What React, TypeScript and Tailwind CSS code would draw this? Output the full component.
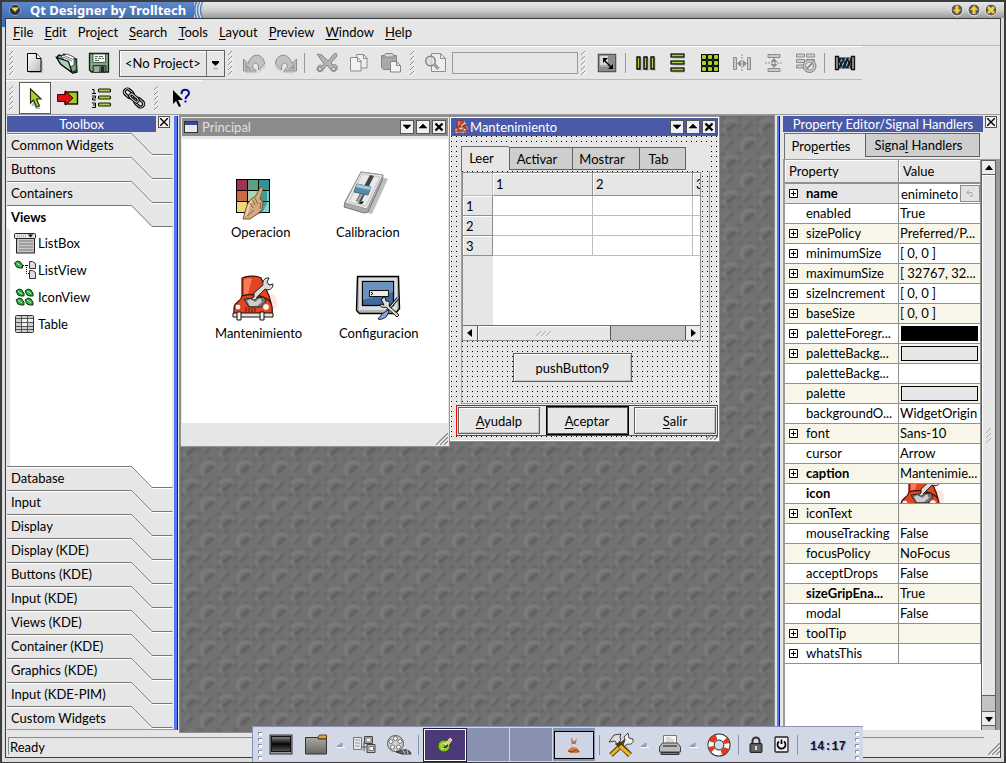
import React from "react";

const DOTS =
  "bg-[#e6e6e6] bg-[linear-gradient(90deg,transparent_1px,#e6e6e6_1px),linear-gradient(#000_1px,#e6e6e6_1px)] bg-[size:5px_5px]";

type IconProps = { w: number; h: number; children: React.ReactNode; cls?: string };

function Ico({ w, h, children, cls }: IconProps) {
  return (
    <svg width={w} height={h} viewBox={`0 0 ${w} ${h}`} className={`shrink-0 ${cls ?? ""}`} aria-hidden="true">
      {children}
    </svg>
  );
}

/* ---------- toolbar icons ---------- */

const NewIcon = () => (
  <Ico w={20} h={22}>
    <path d="M4 20.500h13V9" stroke="#aaa" fill="none" />
    <path d="M2.500 1.500h9l4.500 5v13h-13.500z" fill="url(#paper)" stroke="#000" />
    <path d="M11.500 1.500v5h4.500" fill="#fff" stroke="#000" />
  </Ico>
);
const OpenIcon = () => (
  <Ico w={24} h={22}>
    <path d="M2 5l2-2 3 1 2-2 5 3 7 2 1 13-4 1L5 11z" fill="#7aa887" stroke="#000" strokeWidth="1.200" />
    <path d="M6 4l6-2 7 3v8l-4 2z" fill="#fff" stroke="#333" strokeWidth=".8" />
    <path d="M8 5l9 4M9 3.500l9 4" stroke="#555" strokeWidth=".8" />
    <path d="M1.500 5.500l12 4 3.500 11L6 12.500z" fill="#a9d2b0" stroke="#000" strokeWidth="1.200" />
    <path d="M17 20.500l4.500-2V6.500" fill="none" stroke="#163d22" strokeWidth="1.500" />
  </Ico>
);
const SaveIcon = () => (
  <Ico w={22} h={22}>
    <path d="M1.500 1.500h19v18.500h-17l-2-2z" fill="#7cab86" stroke="#0c1f10" strokeWidth="1.300" />
    <path d="M5 2h12.500v8.500H5z" fill="#f5f5f5" stroke="#23472c" strokeWidth=".8" />
    <path d="M7 4.500h3m1 0h4M7 6.500h2m1 0h3m1 0h2M7 8.500h4" stroke="#666" />
    <path d="M5 13.500h13V20H5z" fill="#6a6a6a" stroke="#1b2c20" strokeWidth=".8" />
    <path d="M13 14.500h3V20h-3z" fill="#20252b" />
    <path d="M6 14.500h5V20H6z" fill="#a5a5a5" />
  </Ico>
);
const UndoIcon = ({ flip }: { flip?: boolean }) => (
  <Ico w={24} h={22} cls={flip ? "-scale-x-100" : ""}>
    <path d="M3 20.500h12M17 20l6-6" stroke="#ccc" strokeWidth="1.500" />
    <path d="M1.500 7v12h13l-4-4c0-4 3-5 5-3 1 1 1 3 1 6l6-6c0-6-5-10-10-8.500-3 1-5 4-6.500 8z" fill="#c2c2c2" stroke="#8b8b8b" />
    <path d="M3 10.500v7h7z" fill="#a3a3a3" />
  </Ico>
);
const CutIcon = () => (
  <Ico w={24} h={22}>
    <path d="M2 2l5 1 6 6 5-6 3-2 1 3-6 7 2 2c3-1 5 1 4 4-1 3-5 3-6 1l-4-5-4 5c-2 3-6 2-6-1s3-5 6-3l1-2z" fill="#b4b4b4" stroke="#858585" />
    <circle cx="5" cy="17" r="1.800" fill="#e6e6e6" stroke="#858585" />
    <circle cx="18.500" cy="17" r="1.800" fill="#e6e6e6" stroke="#858585" />
  </Ico>
);
const CopyIcon = () => (
  <Ico w={22} h={22}>
    <path d="M8.500 2.500h7l3.500 3.500v10h-10.500z" fill="#eee" stroke="#8c8c8c" />
    <path d="M15.500 2.500v4h4" fill="none" stroke="#8c8c8c" />
    <path d="M2.500 5.500h7l3.500 3.500v10h-10.500z" fill="#f2f2f2" stroke="#8c8c8c" />
    <path d="M9.500 5.500v4h4" fill="none" stroke="#8c8c8c" />
  </Ico>
);
const PasteIcon = () => (
  <Ico w={24} h={22}>
    <path d="M2.500 3.500h15v14h-13l-2-2z" fill="#a9a9a9" stroke="#858585" />
    <path d="M6.500 1.500h7l2 3.500h-11z" fill="#d5d5d5" stroke="#858585" />
    <path d="M11.500 9.500h6l4 4v6.500h-10z" fill="#f3f3f3" stroke="#858585" />
    <path d="M17.500 9.500v4h4" fill="none" stroke="#858585" />
  </Ico>
);
const FindIcon = () => (
  <Ico w={24} h={22}>
    <path d="M7.500 1.500h9l5 5v13h-14z" fill="#eee" stroke="#8c8c8c" />
    <path d="M16.500 1.500v5h5" fill="none" stroke="#8c8c8c" />
    <circle cx="6.500" cy="9" r="4.800" fill="#ddd" fillOpacity=".8" stroke="#858585" strokeWidth="1.400" />
    <path d="M10 12l4.500 5" stroke="#858585" strokeWidth="3" />
    <path d="M10 12l4.500 5" stroke="#c7c7c7" />
  </Ico>
);
const AdjustIcon = () => (
  <Ico w={20} h={20}>
    <path d="M1.500 1.500h17v17h-17z" fill="#aaa" stroke="#555" strokeWidth="1.500" />
    <path d="M11 2h7v16H2v-4h9z" fill="#8c8c8c" />
    <path d="M3 3h8v9H3z" fill="#d8d8d8" />
    <path d="M7 7l8 8" stroke="#000" strokeWidth="1.500" />
    <path d="M6 5v5l5-5zM16 16v-5l-5 5z" fill="#000" />
  </Ico>
);
const ColsIcon = () => (
  <Ico w={20} h={16}>
    {[1, 8, 15].map((x) => (
      <g key={x}>
        <path d={`M${x + 1} 15h4V3`} stroke="#aaa" fill="none" />
        <rect x={x} y="2" width="3" height="12" fill="#a4cf37" stroke="#000" strokeWidth="1.400" />
      </g>
    ))}
  </Ico>
);
const RowsIcon = () => (
  <Ico w={16} h={20}>
    {[1, 8, 15].map((y) => (
      <g key={y}>
        <path d={`M3 ${y + 4}h12`} stroke="#aaa" />
        <rect x="1" y={y} width="13" height="3" fill="#a4cf37" stroke="#000" strokeWidth="1.200" />
      </g>
    ))}
  </Ico>
);
const GridIcon = () => (
  <Ico w={18} h={18}>
    <rect width="18" height="18" fill="#0c1200" />
    {[0, 1, 2].map((r) =>
      [0, 1, 2].map((c) => <rect key={`${r}${c}`} x={c * 6 + 1} y={r * 6 + 1} width="4" height="4" rx="1" fill="#a8d138" />),
    )}
    <path d="M6 0v18M12 0v18M0 6h18M0 12h18" stroke="#888" strokeWidth=".6" strokeDasharray="1 5" />
  </Ico>
);
const SplitH = () => (
  <Ico w={20} h={20}>
    <path d="M1.500 4.500h3v12h-3zM15.500 4.500h3v12h-3z" fill="#c9c9c9" stroke="#8c8c8c" />
    <path d="M10 1v18" stroke="#8c8c8c" strokeDasharray="2 1" />
    <path d="M5 10.500l4-3.500v7zM15 10.500l-4-3.500v7z" fill="#8c8c8c" />
  </Ico>
);
const SplitV = () => (
  <Ico w={20} h={20}>
    <path d="M4 1.500h12v3H4zM4 15.500h12v3H4z" fill="#c9c9c9" stroke="#8c8c8c" />
    <path d="M1 10h18" stroke="#8c8c8c" strokeDasharray="2 1" />
    <path d="M10 5l-3.500 4h7zM10 15l-3.500-4h7z" fill="#8c8c8c" />
  </Ico>
);
const BreakIcon = () => (
  <Ico w={22} h={22}>
    <path d="M1.500 2h8v3h-8zM11.500 2h8v3h-8zM1.500 7.500h8v3h-8zM11.500 7.500h8v3h-8zM1.500 13h8v3h-8z" fill="#cfcfcf" stroke="#8c8c8c" />
    <circle cx="14.500" cy="14" r="6.500" fill="#c8c8c8" stroke="#7f7f7f" />
    <circle cx="14.500" cy="14" r="4" fill="#eee" stroke="#8c8c8c" />
    <path d="M11.500 17l6-6" stroke="#8c8c8c" strokeWidth="2" />
  </Ico>
);
const SpacerIcon = () => (
  <Ico w={22} h={16}>
    <path d="M4.500 2.500h13v11h-13z" fill="#16222b" />
    <path d="M5 10l3-6M7 13l5-10M11 13l5-10M15 13l2.500-5" stroke="#86bddb" strokeWidth="1.300" />
    <path d="M5 4l3 8M9 3l3 10M13 3l4 9" stroke="#0a1014" />
    <path d="M1.500 1.500h3v13h-3zM17.500 1.500h3v13h-3z" fill="#999" stroke="#111" strokeWidth="1.300" />
  </Ico>
);
const PointerIcon = () => (
  <Ico w={16} h={22}>
    <path d="M5 19l2-3 3 6 3-1" stroke="#bbb" fill="none" strokeWidth="2" />
    <path d="M3.500 2v14l3-3 3 7 3-1-3-7h4.500z" fill="#a9cf33" stroke="#26330a" strokeWidth="1.200" />
  </Ico>
);
const TabOrderIcon = () => (
  <Ico w={24} h={20}>
    <rect x="9" y="4" width="12.500" height="12" fill="#9ccb22" stroke="#000" strokeWidth="1.300" />
    <path d="M1.500 6.500h8V3l7.500 7-7.500 7v-3.500h-8z" fill="#e01010" stroke="#350000" />
  </Ico>
);
const NumberedIcon = () => (
  <Ico w={22} h={22}>
    <path d="M2 2.500h2v4M2 6.500h4M2 9h3.500v2H2.500v2H6M2 16h3.500v4.500H2M3 18h2" stroke="#000" fill="none" />
    {[2, 9, 16].map((y) => (
      <rect key={y} x="8.500" y={y} width="12" height="3" rx="1" fill="#a4cf37" stroke="#172000" strokeWidth="1.200" />
    ))}
  </Ico>
);
const ChainIcon = () => (
  <Ico w={24} h={24}>
    <g transform="rotate(42 12 12)" fill="none">
      <rect x="0" y="9" width="10" height="6" rx="3" stroke="#000" strokeWidth="3.200" />
      <rect x="0" y="9" width="10" height="6" rx="3" stroke="#c9c9c9" />
      <rect x="14" y="9" width="10" height="6" rx="3" stroke="#000" strokeWidth="3.200" />
      <rect x="14" y="9" width="10" height="6" rx="3" stroke="#c9c9c9" />
      <rect x="7" y="10" width="10" height="4" rx="2" stroke="#000" strokeWidth="3" />
      <rect x="7" y="10" width="10" height="4" rx="2" stroke="#ddd" />
    </g>
  </Ico>
);
const WhatsThisIcon = () => (
  <Ico w={20} h={20}>
    <path d="M2 2v14l3-3 3 6 2-1-3-6h5z" fill="#000" />
    <path d="M10.500 6c0-6 7.500-5 7.500-1 0 3-3.500 3-3.500 6" fill="none" stroke="#0a0a90" strokeWidth="2" />
    <path d="M13.500 12.500h2v2h-2z" fill="#0a0a90" />
  </Ico>
);

/* ---------- form pictures ---------- */

const CarIcon = ({ w = 45, h = 46 }: { w?: number; h?: number }) => (
  <svg width={w} height={h} viewBox="0 0 45 46" className="shrink-0" aria-hidden="true">
    <ellipse cx="40" cy="27" rx="5" ry="8" fill="#f6c9bd" opacity=".45" />
    <path d="M10 3c6-3 16-2 19 0l8 18 2 7-28 1-1-10z" fill="#e2451f" stroke="#400b00" strokeWidth="1.200" />
    <path d="M12 5c2-2 6-2 8-1l-4 15-4 4z" fill="#f77c58" />
    <path d="M2 33c0-6 7-6 8-12 8-3 18-1 25 3 5 3 6 8 5 15l-1 2H2z" fill="#e34522" stroke="#3c0a00" strokeWidth="1.200" />
    <path d="M12 24l20-2 2 4-5 6H17z" fill="#747474" stroke="#252525" />
    <path d="M15 26l5-3 3 4 5-4 2 4-5 4h-7z" fill="#cdcdcd" />
    <path d="M14 32v5M17 33v4M20 33v4M23 33v4" stroke="#5a1505" />
    <circle cx="6" cy="32" r="3" fill="#fff1e9" stroke="#b4482f" />
    <circle cx="34" cy="32" r="3.500" fill="#fff1e9" stroke="#b4482f" />
    <path d="M1 38h40v4H1z" fill="#e5e5e5" stroke="#111" />
    <path d="M5 37h4v8H5zM28 37h4v8h-4z" fill="#f2f2f2" stroke="#111" />
    <path d="M22 18l9-8c-1-4 2-8 6-7l-2 4 2 3 4-1c0 5-4 7-8 5l-8 8c-1 3-3 4-6 2l3-2z" fill="#ddd" stroke="#222" />
  </svg>
);
const TouchIcon = () => {
  const colors = ["#a03354", "#5da184", "#2f9494", "#cc6a43", "#a9d7b4", "#6fd0cb", "#f0d778", "#b6e2c6", "#7cd8d2"];
  return (
    <Ico w={40} h={44}>
      {colors.map((c, i) => (
        <rect key={i} x={3.500 + (i % 3) * 11} y={2.500 + Math.floor(i / 3) * 11} width="11" height="11" fill={c} stroke="#000" />
      ))}
      <path d="M31 13l3 2v12l-5 9-10 4z" fill="#205450" opacity=".45" />
      <path d="M10 42l4-14 4-6 4-2 5-9c1-2 3-1 3 1l-3 10 3 3-1 8-6 5-6 4z" fill="#d3ab7e" stroke="#6d4c2c" strokeWidth=".9" />
      <path d="M13 39l3-11 4-6" stroke="#f0d3ae" strokeWidth="2" fill="none" />
      <path d="M19 22l3 6M22 21l3 6M17 26l3 5M14 39l7-6M28 25l-1 7" stroke="#8a6038" fill="none" />
    </Ico>
  );
};
const SliderIcon = () => (
  <Ico w={48} h={46}>
    <path d="M20 42l10 2 16-35-6-2z" fill="#000" opacity=".25" />
    <path d="M19 2l22 3-1 6-14 31-4 1L2 37l1-5z" fill="#aaa" stroke="#777" />
    <path d="M19 2l22 3-16 34L3 33z" fill="#e9e9e9" stroke="#999" />
    <path d="M20 4l18 3-14 29-17-4z" fill="none" stroke="#c4c4c4" />
    <path d="M28 5l-14 26 5 1L32 6z" fill="#444" />
    <path d="M21 22l-5 9" stroke="#aaa" strokeWidth="2.500" />
    <path d="M15 14l14 3-3 8-14-3z" fill="#5a8ca2" stroke="#3b6c80" />
    <path d="M15 14l14 3-1 3-14-3z" fill="#a9cbd8" />
    <path d="M15 33l7-2-2 3z" fill="#111" />
  </Ico>
);
const MonitorIcon = () => (
  <Ico w={48} h={46}>
    <path d="M2.500 1.500h41l1 32-4 5h-36l-3-3z" fill="#b4b4b4" stroke="#000" strokeWidth="1.400" />
    <path d="M4 3h38v32H4z" fill="#dcdcdc" />
    <rect x="7.500" y="6.500" width="31" height="24" fill="#41699d" stroke="#000" strokeWidth="1.300" />
    <path d="M8 7h30v10L8 25z" fill="#6b93bf" />
    <rect x="14.500" y="15.500" width="19" height="6" fill="#ebebeb" stroke="#111" />
    <path d="M16 17l2 1.500-2 1.500" stroke="#000" fill="none" />
    <path d="M43 23L32 36" stroke="#222" strokeWidth="3" />
    <path d="M43 23L32 36" stroke="#fff" />
    <path d="M33 35l-6 4-4 5c2 1 5 0 8-2l3-5z" fill="#89a7d2" stroke="#152540" />
    <path d="M26 24l4-2 1 4c3 0 4 1 3 5l10 9-2 2-11-10c-3 1-6 0-6-3l4 1z" fill="#dedede" stroke="#111" />
  </Ico>
);

/* ---------- toolbox entries ---------- */

const ListBoxIcon = () => (
  <Ico w={22} h={22}>
    <rect x="2.500" y="6" width="18" height="15" fill="#c8c8c8" stroke="#222" />
    <rect x=".5" y="1.500" width="21" height="5" rx="1" fill="#e5e5e5" stroke="#222" />
    <path d="M14 2.500h5l-2.500 3z" fill="#000" />
    <path d="M3 4h9" stroke="#888" strokeDasharray="1 1" />
    <path d="M5 9h14M5 12h14M5 15h14M5 18h14" stroke="#777" />
  </Ico>
);
const LEAF = "M0 2l3-2 3 1 1 2 1 1v3l-3 0-3-1z";
const ListViewIcon = () => (
  <Ico w={22} h={20}>
    <g transform="translate(.5 1)">
      <path d={LEAF} fill="#2fae44" stroke="#06340e" />
      <path d="M2 2l4 3" stroke="#a9ecb0" />
    </g>
    <path d="M9 5.500h6M12.500 5v9M12 13.500h3" stroke="#000" strokeDasharray="1 1" fill="none" />
    <path d="M15.500 1.500h3l3 2v5h-6zM15.500 10.500h3l3 2v6h-6z" fill="#ddd" stroke="#333" />
  </Ico>
);
const IconViewIcon = () => (
  <Ico w={22} h={20}>
    {[[2, 2], [11, 2], [2, 11], [11, 11]].map(([x, y]) => (
      <g key={`${x}-${y}`} transform={`translate(${x} ${y})`}>
        <path d={LEAF} fill="#2fae44" stroke="#06340e" />
        <path d="M2 2l4 3" stroke="#a9ecb0" />
      </g>
    ))}
  </Ico>
);
const TableIcon = () => (
  <Ico w={22} h={20}>
    <rect x="1.500" y="1.500" width="18" height="17" rx="1" fill="#cfcfcf" stroke="#333" />
    <path d="M2 4.500h17M2 8.500h17M2 12.500h17M2 15.500h17M7.500 2v16M13.500 2v16" stroke="#555" />
    <path d="M8 5h5v3H8zM14 5h5v3h-5zM8 9h5v3H8z" fill="#f3f3f3" />
  </Ico>
);

/* ---------- small building blocks ---------- */

function Handle() {
  return (
    <svg width="13" height="26" viewBox="0 0 13 26" className="shrink-0" aria-hidden="true">
      {[1, 6, 11, 16, 21].map((y) => (
        <g key={y}>
          <path d={`M3 ${y + 4}l4-4`} stroke="#8c8c8c" />
          <path d={`M4 ${y + 4.500}l4-4`} stroke="#fff" />
        </g>
      ))}
    </svg>
  );
}
const Sep = ({ cls }: { cls: string }) => <div className={`h-5 w-px shrink-0 bg-[#9a9a9a] ${cls}`} />;

function ToolButton({ label, children, pressed, disabled }: { label: string; children: React.ReactNode; pressed?: boolean; disabled?: boolean }) {
  return (
    <button
      type="button"
      aria-label={label}
      disabled={disabled}
      className={`flex h-8 w-8 shrink-0 items-center justify-center ${pressed ? "border border-[#5f5f5f] bg-white" : ""}`}
    >
      {children}
    </button>
  );
}

function Mnemonic({ text, at }: { text: string; at: number }) {
  return (
    <span>
      {text.slice(0, at)}
      <span className="underline underline-offset-2">{text[at]}</span>
      {text.slice(at + 1)}
    </span>
  );
}

function CloseX({ label }: { label: string }) {
  return (
    <button type="button" aria-label={label} className="flex size-3 items-center justify-center border border-[#555] bg-[#f2f2f2]">
      <svg width="8" height="8" viewBox="0 0 8 8" aria-hidden="true">
        <path d="M0 0l8 8M8 0L0 8" stroke="#000" strokeWidth="1.400" />
      </svg>
    </button>
  );
}

function DockTitle({ title }: { title: string }) {
  return (
    <div className="flex h-[18px] shrink-0 items-start gap-0.5 pt-px pl-px">
      <div className="h-4 flex-1 bg-[#4a5aa8] text-center leading-4 text-white">{title}</div>
      <CloseX label={`Close ${title}`} />
    </div>
  );
}

function MdiButtons() {
  const shapes = ["M2 4h8l-4 4z", "M2 7h8l-4-4z", ""];
  return (
    <div className="flex gap-0.5">
      {shapes.map((d, i) => (
        <button
          key={i}
          type="button"
          aria-label={["Minimize", "Maximize", "Close"][i]}
          className="size-3.5 border border-[#555] bg-[#f0f0f0]"
        >
          <svg width="12" height="12" viewBox="0 0 12 12" aria-hidden="true">
            {d ? <path d={d} fill="#000" stroke="#000" strokeWidth=".6" /> : <path d="M2.500 2.500l7 7M9.500 2.500l-7 7" stroke="#000" strokeWidth="2.400" />}
          </svg>
        </button>
      ))}
    </div>
  );
}

function Grip() {
  return (
    <svg width="12" height="12" viewBox="0 0 12 12" className="shrink-0" aria-hidden="true">
      <path d="M0 12L12 0M4 12l8-8M8 12l4-4" stroke="#888" strokeWidth="1.300" />
      <path d="M2 12L12 2M6 12l6-6M10 12l2-2" stroke="#fff" />
    </svg>
  );
}

/* ---------- toolbox ---------- */

function ToolboxTab({ label, active, over }: { label: string; active?: boolean; over?: boolean }) {
  return (
    <button type="button" className={`relative flex h-6 w-full shrink-0 items-center pl-1 text-left ${active ? "font-bold" : ""}`}>
      <svg width="166" height="24" viewBox="0 0 166 24" className="absolute inset-0" aria-hidden="true">
        {over && <path d="M125 0l20 21h20V0z" fill="#fff" />}
        {active && <path d="M0 1h125l20 21h20v2H0z" fill="#fff" />}
        <path d="M0 1.500h124.500l20 21h21" fill="none" stroke="#fff" />
        <path d="M0 .5h124.500l20.500 21h20.500" fill="none" stroke="#777" />
      </svg>
      <span className="relative">{label}</span>
    </button>
  );
}

function Toolbox() {
  const items: [string, React.ReactNode][] = [
    ["ListBox", <ListBoxIcon />],
    ["ListView", <ListViewIcon />],
    ["IconView", <IconViewIcon />],
    ["Table", <TableIcon />],
  ];
  const lower = ["Database", "Input", "Display", "Display (KDE)", "Buttons (KDE)", "Input (KDE)", "Views (KDE)", "Container (KDE)", "Graphics (KDE)", "Input (KDE-PIM)", "Custom Widgets"];
  return (
    <aside className="flex w-[168px] shrink-0 flex-col">
      <div className="pr-1">
        <DockTitle title="Toolbox" />
      </div>
      <div className="flex flex-1 flex-col pl-px">
        <ToolboxTab label="Common Widgets" />
        <ToolboxTab label="Buttons" />
        <ToolboxTab label="Containers" />
        <ToolboxTab label="Views" active />
        <ul className="mr-0.5 ml-[3px] flex-1 bg-white pl-1">
          {items.map(([name, icon]) => (
            <li key={name} className="flex h-[27px] items-center gap-0.5">
              {icon}
              <span>{name}</span>
            </li>
          ))}
        </ul>
        {lower.map((l, i) => (
          <ToolboxTab key={l} label={l} over={i === 0} />
        ))}
        <div className="mt-[-1px] h-px bg-[#999]" />
      </div>
    </aside>
  );
}

/* ---------- workspace ---------- */

function Texture() {
  return (
    <svg className="absolute inset-0 h-full w-full" aria-hidden="true">
      <defs>
        <filter id="soft" x="-20%" y="-20%" width="140%" height="140%">
          <feGaussianBlur stdDeviation="1" />
        </filter>
        <pattern id="bumps" width="36" height="36" patternUnits="userSpaceOnUse">
          <rect width="36" height="36" fill="#717171" />
          <g filter="url(#soft)" fill="none" strokeLinecap="round">
            <path d="M5 16a7 7 0 0 1 12-9M23 34a7 7 0 0 1 12-9" stroke="#808080" strokeWidth="2.500" />
            <path d="M8 14l7-6M26 32l7-6" stroke="#5d5d5d" strokeWidth="3" />
            <path d="M25 13l5-6M7 31l5-6" stroke="#636363" strokeWidth="3" />
            <path d="M23 11l5-6M5 29l5-6" stroke="#7d7d7d" strokeWidth="2" />
            <path d="M2 2h1M19 1h1M2 19h1M20 19h1M19 10h1M2 10h1M10 19h1M30 19h1" stroke="#626262" strokeWidth="3" />
          </g>
        </pattern>
      </defs>
      <rect width="100%" height="100%" fill="url(#bumps)" />
    </svg>
  );
}

function PrincipalWindow() {
  const items: [string, React.ReactNode, string, string][] = [
    ["Operacion", <TouchIcon />, "left-[49px] top-[37px]", "pr-4"],
    ["Calibracion", <SliderIcon />, "left-[154px] top-[33px]", "pr-1 pb-1 mb-1"],
    ["Mantenimiento", <CarIcon />, "left-[33px] top-[136px]", "pr-2 mb-0.5"],
    ["Configuracion", <MonitorIcon />, "left-[157px] top-[136px]", "mb-0.5"],
  ];
  return (
    <section className="absolute top-0 left-0 flex h-[331px] w-[270px] flex-col border border-[#909090] bg-[#e6e6e6] p-px">
      <header className="flex h-[18px] shrink-0 items-center gap-1 bg-[#8c8c8c] pr-0.5 pl-0.5 text-[#e0e0e0]">
        <svg width="14" height="12" viewBox="0 0 14 12" aria-hidden="true">
          <rect x=".5" y=".5" width="13" height="11" fill="#e8e8e8" stroke="#333" />
          <path d="M1 1h12v3H1z" fill="#3b45a5" />
        </svg>
        <span className="flex-1">Principal</span>
        <MdiButtons />
      </header>
      <div className="relative mt-[3px] flex-1 bg-white">
        {items.map(([name, icon, pos, pad]) => (
          <button key={name} type="button" className={`absolute flex flex-col items-center ${pos}`}>
            <span className={`flex h-[46px] items-center ${pad}`}>{icon}</span>
            <span className="leading-5">{name}</span>
          </button>
        ))}
      </div>
      <footer className="flex h-[22px] shrink-0 items-end justify-end">
        <Grip />
      </footer>
    </section>
  );
}

const PUSH = "border border-[#606060] bg-[#e6e6e6] shadow-[inset_1px_1px_0_#fff,inset_-1px_-1px_0_#c4c4c4]";

function MantenimientoWindow() {
  const tabs: [string, string][] = [
    ["Activar", "w-16"],
    ["Mostrar", "w-[67px]"],
    ["Tab", "w-[46px]"],
  ];
  const head = "border-r border-b border-[#8f8f8f] bg-[#e6e6e6] p-0 pl-[3px] text-left font-normal shadow-[inset_1px_1px_0_#fff]";
  const cell = "border-r border-b border-[#bdbdbd] p-0";
  return (
    <section className="absolute top-0 left-[269px] flex h-[326px] w-[271px] flex-col border border-[#909090] bg-white p-px">
      <header className="flex h-[18px] shrink-0 items-center gap-0.5 bg-[#4a5aa8] pr-0.5 pl-[3px] text-white">
        <CarIcon w={14} h={14} />
        <span className="flex-1">Mantenimiento</span>
        <MdiButtons />
      </header>
      <div className={`flex flex-1 flex-col ${DOTS}`}>
        <div className="mt-2.5 mr-2 ml-2.5 flex flex-1 flex-col bg-[#e6e6e6]">
          <div className="flex h-[25px] items-end bg-[#e6e6e6]" role="tablist">
            <button role="tab" aria-selected="true" type="button" className="h-[25px] w-12 border-t border-l border-[#707070] bg-[#e6e6e6] pr-2 pb-0.5">
              Leer
            </button>
            {tabs.map(([t, w], i) => (
              <button key={t} role="tab" aria-selected="false" type="button" className={`mb-px h-[23px] border-y border-r border-[#606060] bg-[#cecece] pr-2 ${i === 0 ? "border-l" : ""} ${w}`}>
                {t}
              </button>
            ))}
          </div>
          <div className={`flex flex-1 flex-col border border-t-0 border-[#a0a0a0] pt-px pr-2 ${DOTS}`}>
            <div className="flex h-[169px] flex-col border border-[#8c8c8c] bg-white">
              <div className="flex flex-1 flex-col overflow-hidden bg-[linear-gradient(90deg,#e6e6e6_30px,#fff_30px)]">
                <table className="w-[270px] table-fixed border-separate border-spacing-0">
                  <colgroup>
                    <col className="w-[30px]" />
                    <col className="w-[100px]" />
                    <col className="w-[100px]" />
                    <col className="w-10" />
                  </colgroup>
                  <thead>
                    <tr className="h-[23px]">
                      <td className="border-r border-b border-[#bbb] bg-[#e6e6e6] p-0" />
                      <th className={head}>1</th>
                      <th className={head}>2</th>
                      <th className={head}>3</th>
                    </tr>
                  </thead>
                  <tbody>
                    {["1", "2", "3"].map((n) => (
                      <tr key={n} className="h-5">
                        <th className={head}>{n}</th>
                        <td className={cell} />
                        <td className={cell} />
                        <td className={cell} />
                      </tr>
                    ))}
                  </tbody>
                </table>
              </div>
              <div className="flex h-[15px] border-t border-[#707070] bg-[#c3c3c3]">
                <button type="button" aria-label="Scroll left" className="flex w-[15px] items-center justify-center border-r border-[#555] bg-[#ececec]">
                  <svg width="6" height="8" viewBox="0 0 6 8" aria-hidden="true"><path d="M5 0v8L0 4z" /></svg>
                </button>
                <div className="flex w-[133px] items-center justify-center border-r border-[#555] bg-[#e6e6e6] shadow-[inset_1px_1px_0_#fff]">
                  <svg width="18" height="7" viewBox="0 0 18 7" aria-hidden="true"><path d="M1 6l5-5M6 6l5-5M11 6l5-5" stroke="#aaa" /></svg>
                </div>
                <div className="flex-1" />
                <button type="button" aria-label="Scroll right" className="flex w-[15px] items-center justify-center border-l border-[#555] bg-[#ececec]">
                  <svg width="6" height="8" viewBox="0 0 6 8" aria-hidden="true"><path d="M1 0v8l5-4z" /></svg>
                </button>
              </div>
            </div>
            <button type="button" className={`mt-3 ml-[51px] h-[29px] w-[119px] ${PUSH}`}>
              pushButton9
            </button>
          </div>
        </div>
        <div className="mt-px ml-[5px] flex h-[31px] items-center justify-between border border-[#f00] bg-[#e6e6e6] px-px">
          <button type="button" className={`h-[27px] w-[82px] ${PUSH}`}><Mnemonic text="Ayudalp" at={0} /></button>
          <button type="button" className="h-[29px] w-[83px] border border-black bg-[#e6e6e6] shadow-[inset_1px_1px_0_#555,inset_-1px_-1px_0_#555]"><Mnemonic text="Aceptar" at={0} /></button>
          <button type="button" className={`h-[27px] w-[82px] ${PUSH}`}><Mnemonic text="Salir" at={0} /></button>
        </div>
        <div className="flex h-1 items-end justify-end overflow-hidden">
          <Grip />
        </div>
      </div>
    </section>
  );
}

/* ---------- property editor ---------- */

type Prop = { n: string; v?: string; plus?: boolean; bold?: boolean; kind?: "black" | "grey" | "icon" | "edit" };
const PROPS: Prop[] = [
  { n: "name", v: "enimineto", plus: true, bold: true, kind: "edit" },
  { n: "enabled", v: "True" },
  { n: "sizePolicy", v: "Preferred/P...", plus: true },
  { n: "minimumSize", v: "[ 0, 0 ]", plus: true },
  { n: "maximumSize", v: "[ 32767, 32...", plus: true },
  { n: "sizeIncrement", v: "[ 0, 0 ]", plus: true },
  { n: "baseSize", v: "[ 0, 0 ]", plus: true },
  { n: "paletteForegr...", plus: true, kind: "black" },
  { n: "paletteBackg...", plus: true, kind: "grey" },
  { n: "paletteBackg..." },
  { n: "palette", kind: "grey" },
  { n: "backgroundO...", v: "WidgetOrigin" },
  { n: "font", v: "Sans-10", plus: true },
  { n: "cursor", v: "Arrow" },
  { n: "caption", v: "Mantenimie...", plus: true, bold: true },
  { n: "icon", bold: true, kind: "icon" },
  { n: "iconText", plus: true },
  { n: "mouseTracking", v: "False" },
  { n: "focusPolicy", v: "NoFocus" },
  { n: "acceptDrops", v: "False" },
  { n: "sizeGripEna...", v: "True", bold: true },
  { n: "modal", v: "False" },
  { n: "toolTip", plus: true },
  { n: "whatsThis", plus: true },
];

function PropValue({ p }: { p: Prop }) {
  if (p.kind === "black") return <div className="mx-0.5 h-[15px] bg-black" />;
  if (p.kind === "grey") return <div className="mx-0.5 h-[15px] border border-black bg-[#e6e6e6]" />;
  if (p.kind === "icon")
    return (
      <div className="flex h-[19px] items-center overflow-hidden">
        <CarIcon />
      </div>
    );
  if (p.kind === "edit")
    return (
      <div className="flex h-[19px] items-center bg-white">
        <input aria-label="name" defaultValue={p.v} className="h-[19px] w-0 flex-1 pl-0.5 outline-none" />
        <button type="button" aria-label="Reset" className="flex h-[17px] w-5 items-center justify-center border border-[#8c8c8c] bg-[#e3e3e3]">
          <svg width="8" height="8" viewBox="0 0 8 8" aria-hidden="true"><path d="M3 0L1 2.500 3 5M1 2.500h5v4H4" fill="none" stroke="#aaa" /></svg>
        </button>
      </div>
    );
  return <span className="block h-[19px] overflow-hidden pl-px leading-[19px] whitespace-nowrap">{p.v}</span>;
}

function PropertyEditor() {
  const th = "h-6 border-r border-b-2 border-[#8f8f8f] bg-[#e6e6e6] p-0 pl-1 text-left font-normal shadow-[inset_1px_1px_0_#fff]";
  return (
    <aside className="flex w-[218px] shrink-0 flex-col">
      <div className="pr-[3px]">
        <DockTitle title="Property Editor/Signal Handlers" />
      </div>
      <div className="flex h-[26px] shrink-0 items-start pl-0.5" role="tablist">
        <button role="tab" aria-selected="true" type="button" className="h-[26px] w-[81px] border-t border-l border-[#707070] bg-[#e6e6e6] pr-2 pb-0.5">
          <Mnemonic text="Properties" at={3} />
        </button>
        <button role="tab" aria-selected="false" type="button" className="h-6 w-[115px] border border-[#606060] bg-[#cecece] pr-2">
          <Mnemonic text="Signal Handlers" at={5} />
        </button>
      </div>
      <div className="ml-px flex min-h-0 flex-1 border-t border-l-2 border-[#9a9a9a] bg-white">
        <div className="min-w-0 flex-1 overflow-hidden">
          <table className="w-full table-fixed border-separate border-spacing-0">
            <colgroup>
              <col className="w-[114px]" />
              <col />
            </colgroup>
            <thead>
              <tr>
                <th className={th}>Property</th>
                <th className={th}>Value</th>
              </tr>
            </thead>
            <tbody>
              {PROPS.map((p, i) => (
                <tr key={i} className={i === 0 ? "bg-[#e6e6e6]" : i % 2 ? "bg-white" : "bg-[#f8f6e9]"}>
                  <td className="h-5 border-r border-b border-[#8f8f8f] p-0">
                    <div className="flex items-center pl-1">
                      <span className="flex w-[17px] shrink-0">
                        {p.plus && (
                          <svg width="9" height="9" viewBox="0 0 9 9" aria-hidden="true">
                            <path d="M.5.5h8v8h-8zM2 4.500h5M4.500 2v5" fill="#fff" stroke="#000" />
                          </svg>
                        )}
                      </span>
                      <span className={`h-[19px] overflow-hidden leading-[19px] whitespace-nowrap ${p.bold ? "font-bold" : ""}`}>{p.n}</span>
                    </div>
                  </td>
                  <td className="h-5 border-r border-b border-[#8f8f8f] p-0">
                    <PropValue p={p} />
                  </td>
                </tr>
              ))}
            </tbody>
          </table>
        </div>
        <div className="flex w-[15px] shrink-0 flex-col border-x border-[#606060] bg-[#c3c3c3]">
          <button type="button" aria-label="Scroll up" className="flex h-[15px] items-center justify-center border-y border-[#606060] bg-[#ececec]">
            <svg width="8" height="6" viewBox="0 0 8 6" aria-hidden="true"><path d="M0 5h8L4 0z" /></svg>
          </button>
          <div className="flex flex-1 items-center justify-center border-b border-[#606060] bg-[#e6e6e6] shadow-[inset_1px_1px_0_#fff]">
            <svg width="8" height="18" viewBox="0 0 8 18" aria-hidden="true"><path d="M1 7l5-5M1 12l5-5M1 17l5-5" stroke="#aaa" /></svg>
          </div>
          <div className="h-[15px]" />
          <button type="button" aria-label="Scroll down" className="mb-1 flex h-[15px] items-center justify-center border-y border-[#606060] bg-[#ececec]">
            <svg width="8" height="6" viewBox="0 0 8 6" aria-hidden="true"><path d="M0 1h8L4 6z" /></svg>
          </button>
        </div>
        <div className="w-1 bg-[#9a9a9a]" />
      </div>
    </aside>
  );
}

/* ---------- desktop panel ---------- */

const PanelDots = () => (
  <svg width="5" height="30" viewBox="0 0 5 30" className="shrink-0" aria-hidden="true">
    {[2, 8, 14, 20, 26].map((y) => (
      <g key={y}>
        <rect x="0" y={y} width="4" height="3" fill="#8791b3" />
        <rect x="1" y={y + 1} width="3" height="3" fill="#fff" />
      </g>
    ))}
  </svg>
);
const PanelSep = () => <div className="h-5 w-px shrink-0 bg-[#8791b3]" />;
const PanelArrow = () => (
  <Ico w={10} h={6}>
    <path d="M1 4.500L6 1v3.500z" fill="#aab3cc" stroke="#8791b3" />
    <path d="M1 5.500h8" stroke="#fff" />
  </Ico>
);

function Panel() {
  return (
    <nav aria-label="Desktop panel" className="absolute bottom-0 left-[250px] flex h-9 w-[611px] items-center border-t border-l border-[#8791b3] bg-[#d2d8e6] pl-[5px]">
      <PanelDots />
      <button type="button" aria-label="Terminal" className="ml-1.5">
        <Ico w={24} h={22}>
          <rect x="1" y="1" width="22" height="19" fill="#999" stroke="#333" />
          <rect x="2.500" y="2.500" width="19" height="15" fill="url(#term)" stroke="#111" />
        </Ico>
      </button>
      <button type="button" aria-label="Home" className="ml-[11px]">
        <Ico w={24} h={22}>
          <path d="M14 3l1.500-2h7v4H14z" fill="#e0a738" stroke="#5a4310" />
          <path d="M1.500 3.500h12l1 1.500h8v15h-21z" fill="url(#folder)" stroke="#333" />
        </Ico>
      </button>
      <span className="ml-2"><PanelArrow /></span>
      <button type="button" aria-label="Network" className="ml-1.5">
        <Ico w={24} h={20}>
          <path d="M1.500 2.500h8v12h-8z" fill="#e7e7e7" stroke="#777" />
          <path d="M3 5h5M3 8h5M3 11h5" stroke="#999" />
          <path d="M12.500 1.500h8v7h-8zM15 9.500h8v8h-8z" fill="#bdbdbd" stroke="#444" />
          <path d="M14 3h5v4h-5zM17 11.500h4.500v4H17z" fill="#f3f3f3" stroke="#777" />
          <path d="M9 12h6M12 7v9" stroke="#555" />
        </Ico>
      </button>
      <button type="button" aria-label="Multimedia" className="ml-2.5">
        <Ico w={26} h={22}>
          <circle cx="9.500" cy="9.500" r="8" fill="#cfcfcf" stroke="#555" />
          {[[9.5, 4.5], [14, 7.5], [12.5, 13], [6.5, 13], [5, 7.5]].map(([x, y]) => (
            <circle key={x + y * 9} cx={x} cy={y} r="2" fill="#fff" stroke="#555" strokeWidth=".8" />
          ))}
          <path d="M10 18l7-2c5-1 8 2 8 4h-9z" fill="#666" stroke="#333" />
          <path d="M17 16l2 4M21 16l1 4" stroke="#bbb" />
        </Ico>
      </button>
      <div className="ml-1.5"><PanelSep /></div>
      <button type="button" aria-label="Desktop 1" className="ml-[5px] flex h-8 w-[42px] items-center justify-center border border-white bg-[#4a3a78] outline outline-[#241c40]">
        <Ico w={18} h={18}>
          <circle cx="8" cy="10" r="6" fill="#8fc52a" stroke="#38500c" />
          <path d="M5 10a3 3 0 0 1 5-2M5 12l5 1" stroke="#dff29a" fill="none" />
          <path d="M9 9l5-7 2 2-4 5z" fill="#f3bb4c" stroke="#fff" strokeWidth=".8" />
          <path d="M8 12l4-3" stroke="#2e3f0b" strokeWidth="2" />
        </Ico>
      </button>
      <div className="ml-px flex h-[33px] gap-px">
        <button type="button" aria-label="Desktop 2" className="w-[42px] bg-[#8892b0]" />
        <button type="button" aria-label="Desktop 3" className="w-[42px] bg-[#8892b0]" />
        <button type="button" aria-label="Desktop 4" className="flex w-[42px] items-center bg-[#8892b0] pl-px">
          <span className="flex h-7 w-10 items-center justify-center border border-black bg-[#ced4e3]">
            <Ico w={14} h={18}>
              <path d="M4 1l3 5 3-4-2 8H5z" fill="#a5744a" />
              <path d="M5 8h4l1 4H4z" fill="#d9d3cf" />
              <path d="M1 14l4-3 5 1 3 4-3 1H3z" fill="#d8783a" />
              <path d="M1 15l4 1 4-2 3 2" stroke="#6a3c20" fill="none" />
            </Ico>
          </span>
        </button>
      </div>
      <div className="ml-1"><PanelSep /></div>
      <button type="button" aria-label="Settings" className="ml-2">
        <Ico w={26} h={26}>
          <path d="M3 23L19 8" stroke="#4d3904" strokeWidth="5" />
          <path d="M3 23L15 12" stroke="#efb32b" strokeWidth="3" />
          <path d="M15 13l2-5-1-3 4-4 1 5 4 1c1 4-2 6-6 5l-4 4z" fill="#eee" stroke="#444" />
          <path d="M9 10l13 13" stroke="#4d3904" strokeWidth="5.500" />
          <path d="M12 14l10 9" stroke="#efb32b" strokeWidth="3.500" />
          <path d="M1 10l5-7 7-1-1 3 1 3-4 4-2-3z" fill="#ddd" stroke="#444" />
        </Ico>
      </button>
      <span className="ml-1.5"><PanelArrow /></span>
      <button type="button" aria-label="Printer" className="ml-2">
        <Ico w={24} h={22}>
          <path d="M5.500 11V1.500h13V11" fill="#f7f7f7" stroke="#777" />
          <path d="M8 4h5M8 6h8M8 8h8" stroke="#bbb" />
          <path d="M1.500 13l3-4h15l3 4v5h-21z" fill="#bbb" stroke="#444" />
          <path d="M5 11h14v2H5z" fill="#666" />
          <path d="M3 18.500h18v2H3z" fill="#777" stroke="#333" />
        </Ico>
      </button>
      <span className="ml-[7px]"><PanelArrow /></span>
      <button type="button" aria-label="Help" className="ml-2">
        <Ico w={24} h={24}>
          <circle cx="12" cy="12" r="8" fill="none" stroke="#222" strokeWidth="7" />
          <circle cx="12" cy="12" r="8" fill="none" stroke="#fff" strokeWidth="5.200" />
          <path d="M4.500 9a8 8 0 0 1 5-5M14.500 20a8 8 0 0 0 5-5M4 13.500a8 8 0 0 0 2 4M20 10.500a8 8 0 0 0-2-4" stroke="#dd3a20" strokeWidth="5.200" fill="none" />
        </Ico>
      </button>
      <div className="ml-[7px]"><PanelSep /></div>
      <button type="button" aria-label="Lock screen" className="ml-2.5">
        <Ico w={14} h={18}>
          <path d="M3.500 8V5a3.500 3.500 0 0 1 7 0v3" fill="none" stroke="#333" strokeWidth="2" />
          <rect x="1" y="7.500" width="12" height="9" rx="1" fill="#555" stroke="#222" />
          <path d="M3 10h8M3 12h8M3 14h8" stroke="#777" />
          <path d="M7 10v4" stroke="#fff" strokeWidth="1.500" />
        </Ico>
      </button>
      <button type="button" aria-label="Log out" className="ml-[11px]">
        <Ico w={15} h={17}>
          <rect x="1" y="1" width="13" height="15" rx="1" fill="#eee" stroke="#222" strokeWidth="1.300" />
          <path d="M5 5.500a4 4 0 1 0 5 0M7.500 3.500v4.500" fill="none" stroke="#000" strokeWidth="1.700" />
        </Ico>
      </button>
      <div className="ml-2"><PanelSep /></div>
      <time className="mt-1 ml-3 flex-1 font-['Liberation_Mono',monospace] text-xs leading-4 font-bold text-[#10121c] [text-shadow:1px_1px_0_#a9b2ca]">14:17</time>
      <span className="mr-[3px]"><PanelDots /></span>
    </nav>
  );
}

/* ---------- main window ---------- */

function TitleBar() {
  return (
    <header className="mt-0.5 flex h-4 shrink-0 items-stretch bg-[linear-gradient(#e8e8e8,#cfcfcf_50%,#999)]">
      <div className="flex w-[192px] shrink-0 items-center gap-2 overflow-hidden bg-[linear-gradient(#5f87c8,#4070b4)] pl-1.5">
        <Ico w={14} h={14}>
          <circle cx="7" cy="7" r="5.500" fill="#283048" stroke="#8fa8d0" />
          <path d="M3 4.500h8L7 9z" fill="#f8d640" />
        </Ico>
        <h1 className="font-['Noto_Sans',sans-serif] text-[13px] leading-4 font-bold whitespace-nowrap text-white">Qt Designer by Trolltech</h1>
      </div>
      <svg width="10" height="16" viewBox="0 0 10 16" className="shrink-0" aria-hidden="true">
        <path d="M0 0h4q-4 8 0 16H0z" fill="#4a78bc" />
        <path d="M2.500 0q-4 8 0 16M5.500 0q-4 8 0 16M8.500 0q-4 8 0 16" stroke="#5b83c0" strokeWidth="1.500" fill="none" />
        <path d="M1 0q-4 8 0 16M4 0q-4 8 0 16M7 0q-4 8 0 16" stroke="#dfe6ef" fill="none" />
      </svg>
      <div className="flex flex-1 items-center justify-end gap-[3px] pr-1.5">
        {["M5.500 2.500h3v4h2.500L7 11 3 6.500h2.500z", "M5.500 11h3V7H11L7 2.500 3 7h2.500z", "M3.500 3.500h2L7 5l1.500-1.500h2v2L9 7l1.500 1.500v2h-2L7 9l-1.500 1.500h-2v-2L5 7 3.500 5.500z"].map((d, i) => (
          <button key={i} type="button" aria-label={["Minimize window", "Maximize window", "Close window"][i]}>
            <Ico w={14} h={14}>
              <circle cx="7" cy="7" r="6" fill="#5d5d5d" stroke="#eee" />
              <path d={d} fill="#f5cf3a" />
            </Ico>
          </button>
        ))}
      </div>
    </header>
  );
}

export default function App() {
  const menu: [string, number][] = [["File", 0], ["Edit", 0], ["Project", 3], ["Search", 0], ["Tools", 0], ["Layout", 0], ["Preview", 0], ["Window", 0], ["Help", 0]];
  return (
    <div className="relative flex h-screen min-h-[700px] flex-col overflow-hidden border-x-2 border-b border-[#3a3d3b] bg-[#3a3d3b] font-['Lato',sans-serif] text-[13px] leading-4 text-black">
      <svg width="0" height="0" className="absolute" aria-hidden="true">
        <defs>
          <linearGradient id="paper" x1="0" y1="0" x2="1" y2="1"><stop offset="0" stopColor="#fff" /><stop offset="1" stopColor="#b9b9b9" /></linearGradient>
          <linearGradient id="term" x1="0" y1="0" x2="0" y2="1"><stop offset="0" stopColor="#888" /><stop offset=".5" stopColor="#060606" /><stop offset="1" stopColor="#555" /></linearGradient>
          <linearGradient id="folder" x1="0" y1="0" x2="0" y2="1"><stop offset="0" stopColor="#aaa99f" /><stop offset="1" stopColor="#68675f" /></linearGradient>
        </defs>
      </svg>
      <TitleBar />
      <div className="flex min-h-0 flex-1 flex-col bg-[linear-gradient(90deg,transparent_50%,#dcdcdc_50%),linear-gradient(#4070b4_9px,#dcdcdc_9px)] pr-[3px] pb-1 pl-[3px]">
        <div className="flex min-h-0 flex-1 flex-col border border-[#3a3d3b] bg-[#e6e6e6]">
          <nav className="flex h-[27px] shrink-0 items-center gap-px border-b border-[#bababa] pl-0.5" aria-label="Menu">
            {menu.map(([t, at]) => (
              <button key={t} type="button" className="px-[5px]"><Mnemonic text={t} at={at} /></button>
            ))}
          </nav>
          <div className="flex h-[34px] w-[856px] shrink-0 items-center border-t border-b border-t-white border-b-[#bababa]" role="toolbar">
            <Handle />
            <ToolButton label="New"><NewIcon /></ToolButton>
            <ToolButton label="Open"><OpenIcon /></ToolButton>
            <ToolButton label="Save"><SaveIcon /></ToolButton>
            <div className="relative ml-1 h-[27px] w-[106px] shrink-0">
              <select aria-label="Project" className="h-full w-full appearance-none border border-[#606060] bg-[#e6e6e6] pl-[5px] shadow-[inset_1px_1px_0_#fff]">
                <option>&lt;No Project&gt;</option>
              </select>
              <svg width="18" height="25" viewBox="0 0 18 25" className="pointer-events-none absolute top-px right-px" aria-hidden="true">
                <path d="M.5 0v25" stroke="#777" />
                <path d="M6 10h7v1.500L9.500 15 6 11.500z" fill="#000" />
                <path d="M7 17.500h5" stroke="#bbb" strokeWidth="2" />
              </svg>
            </div>
            <Handle />
            <ToolButton label="Undo" disabled><UndoIcon /></ToolButton>
            <ToolButton label="Redo" disabled><UndoIcon flip /></ToolButton>
            <Sep cls="ml-0.5 mr-1.5" />
            <ToolButton label="Cut" disabled><CutIcon /></ToolButton>
            <ToolButton label="Copy" disabled><CopyIcon /></ToolButton>
            <ToolButton label="Paste" disabled><PasteIcon /></ToolButton>
            <Handle />
            <ToolButton label="Find" disabled><FindIcon /></ToolButton>
            <input aria-label="Search text" disabled className="h-[22px] w-[126px] shrink-0 border border-[#9a9a9a] bg-[#e6e6e6] px-1" />
            <Handle />
            <ToolButton label="Adjust size"><AdjustIcon /></ToolButton>
            <Sep cls="ml-0.5 mr-1" />
            <ToolButton label="Lay out horizontally"><ColsIcon /></ToolButton>
            <ToolButton label="Lay out vertically"><RowsIcon /></ToolButton>
            <ToolButton label="Lay out in a grid"><GridIcon /></ToolButton>
            <ToolButton label="Horizontal splitter" disabled><SplitH /></ToolButton>
            <ToolButton label="Vertical splitter" disabled><SplitV /></ToolButton>
            <ToolButton label="Break layout" disabled><BreakIcon /></ToolButton>
            <Sep cls="ml-0.5 mr-1" />
            <ToolButton label="Spacer"><SpacerIcon /></ToolButton>
          </div>
          <div className="flex h-[34px] w-[196px] shrink-0 items-center border-t border-white" role="toolbar">
            <Handle />
            <div className="flex flex-1 items-center gap-px">
              <ToolButton label="Pointer" pressed><PointerIcon /></ToolButton>
              <ToolButton label="Tab order"><TabOrderIcon /></ToolButton>
              <ToolButton label="Set tab order"><NumberedIcon /></ToolButton>
              <ToolButton label="Connect"><ChainIcon /></ToolButton>
              <Handle />
              <ToolButton label="What's this"><WhatsThisIcon /></ToolButton>
            </div>
          </div>

          <main className="flex min-h-0 flex-1 border-t border-[#9a9a9a]">
            <Toolbox />
            <div className="mt-px mr-px w-1 shrink-0 border-r border-[#222] bg-[#5577f5]" />
            <div className="relative mb-[-3px] min-w-0 flex-1 overflow-hidden border border-[#8c8c8c]">
              <Texture />
              <PrincipalWindow />
              <MantenimientoWindow />
            </div>
            <div className="mt-px mr-0.5 ml-0.5 w-[3px] shrink-0 border-r border-[#222] bg-[#5577f5]" />
            <PropertyEditor />
          </main>

          <footer className="flex h-[27px] shrink-0 items-end gap-1 pb-0.5 pl-0.5">
            <div className="h-[18px] flex-1 border-t border-l border-[#8c8c8c] pl-px leading-[18px]">Ready</div>
            <Grip />
          </footer>
        </div>
      </div>
      <Panel />
    </div>
  );
}
